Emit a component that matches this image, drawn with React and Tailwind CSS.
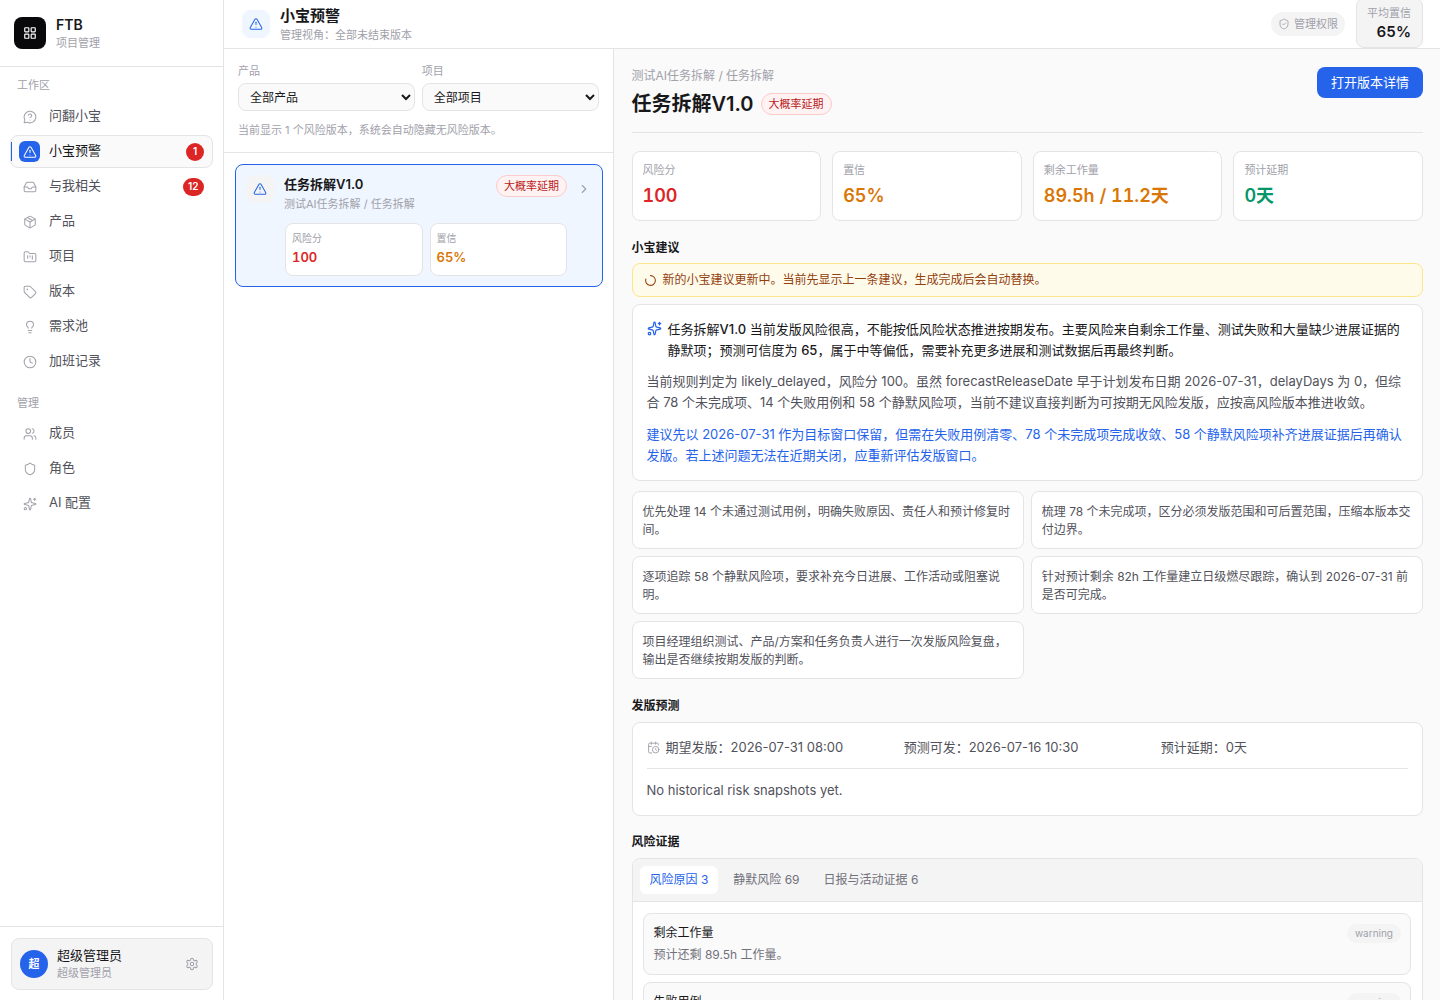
import React from "react";
import {
  MessageCircleQuestion, TriangleAlert, Inbox, Package, FolderKanban, Tag, Lightbulb, Clock,
  Users, Shield, Sparkles, LayoutGrid, ShieldCheck, Settings, ChevronRight, LoaderCircle, CalendarClock,
} from "lucide-react";

const workspace = [
  { label: "问翻小宝", Icon: MessageCircleQuestion },
  { label: "小宝预警", Icon: TriangleAlert, active: true, badge: "1" },
  { label: "与我相关", Icon: Inbox, badge: "12" },
  { label: "产品", Icon: Package },
  { label: "项目", Icon: FolderKanban },
  { label: "版本", Icon: Tag },
  { label: "需求池", Icon: Lightbulb },
  { label: "加班记录", Icon: Clock },
];
const admin = [
  { label: "成员", Icon: Users },
  { label: "角色", Icon: Shield },
  { label: "AI 配置", Icon: Sparkles },
];

function NavItem({ label, Icon, active, badge }) {
  return (
    <div className={`relative flex h-[33px] items-center rounded-lg border pl-2 pr-2 ${active ? "border-[#e4e4e7] bg-[#fafafa]" : "border-transparent"}`}>
      {active && <span className="absolute left-0 top-[6px] h-[19px] w-px bg-[#2563eb]" />}
      <span className={`flex h-[21px] w-[21px] items-center justify-center rounded-md ${active ? "bg-[#2563eb] text-white" : "text-[#a1a1aa]"}`}>
        <Icon size={14} strokeWidth={1.75} />
      </span>
      <span className={`mb-[2px] ml-[9px] flex-1 text-[13px] ${active ? "text-[#18181b]" : "text-[#52525b]"}`}>{label}</span>
      {badge && (
        <span className="flex h-[18px] min-w-[18px] items-center justify-center rounded-full bg-[#dc2626] px-[5.5px] text-[10px] font-semibold text-white">{badge}</span>
      )}
    </div>
  );
}

function Sidebar() {
  return (
    <aside className="flex h-full w-[224px] shrink-0 flex-col border-r border-[#e4e4e7] bg-white">
      <div className="flex h-[67px] items-center gap-[10px] border-b border-[#e4e4e7] pl-[14px]">
        <div className="flex h-8 w-8 items-center justify-center rounded-lg bg-[#09090b] text-white">
          <LayoutGrid size={14} strokeWidth={2} />
        </div>
        <div className="pt-[2px]">
          <div className="text-[14px] font-semibold leading-[18px] text-[#18181b]">FTB</div>
          <div className="text-[11px] leading-[18px] text-[#a1a1aa]">项目管理</div>
        </div>
      </div>
      <div className="flex-1 px-[10px] pt-[10px]">
        <div className="mb-[7px] pl-[7px] text-[11px] leading-[16px] text-[#a1a1aa]">工作区</div>
        <div className="flex flex-col gap-[2px]">
          {workspace.map((i) => <NavItem key={i.label} {...i} />)}
        </div>
        <div className="mb-[6px] mt-[17px] pl-[7px] text-[11px] leading-[16px] text-[#a1a1aa]">管理</div>
        <div className="flex flex-col gap-[2px]">
          {admin.map((i) => <NavItem key={i.label} {...i} />)}
        </div>
      </div>
      <div className="border-t border-[#e4e4e7] px-[11px] pb-[10px] pt-[11px]">
        <div className="flex h-[52px] w-[202px] items-center rounded-lg border border-[#e4e4e7] bg-[#f4f4f5] pl-2 pr-[13px]">
          <div className="flex h-7 w-7 items-center justify-center rounded-full bg-[#2563eb] text-[11px] font-semibold text-white">超</div>
          <div className="ml-[9px] flex-1">
            <div className="text-[13px] leading-[17px] text-[#18181b]">超级管理员</div>
            <div className="text-[11px] leading-[18px] text-[#a1a1aa]">超级管理员</div>
          </div>
          <Settings size={14} strokeWidth={1.75} className="text-[#a1a1aa]" />
        </div>
      </div>
    </aside>
  );
}

function TopBar() {
  return (
    <header className="flex h-[49px] shrink-0 items-center border-b border-[#e4e4e7] bg-white pl-[18px] pr-[17px]">
      <div className="flex h-7 w-7 items-center justify-center rounded-lg bg-[#eff6ff] text-[#2563eb]">
        <TriangleAlert size={14} strokeWidth={1.75} />
      </div>
      <div className="ml-[10px] flex-1 pt-px">
        <div className="text-[15px] font-semibold leading-[20px] text-[#18181b]">小宝预警</div>
        <div className="mt-px text-[11px] leading-[16px] text-[#a1a1aa]">管理视角：全部未结束版本</div>
      </div>
      <div className="flex h-6 items-center gap-1 rounded-full bg-[#f4f4f5] px-[7px] text-[11px] text-[#a1a1aa]">
        <ShieldCheck size={12} strokeWidth={1.75} />
        管理权限
      </div>
      <div className="ml-[11px] mt-[-2px] flex h-[50px] w-[67px] flex-col items-end justify-center rounded-lg border border-[#e4e4e7] bg-[#f4f4f5] px-[11px] pt-px">
        <div className="whitespace-nowrap text-[11px] leading-[16px] text-[#a1a1aa]">平均置信</div>
        <div className="mt-px text-[15px] font-semibold leading-[20px] tabular-nums text-[#18181b]">65%</div>
      </div>
    </header>
  );
}

function RiskBadge() {
  return (
    <span className="inline-flex h-[22px] items-center rounded-full border border-[#fecaca] bg-[#fef2f2] px-[7px] text-[11px] text-[#b91c1c]">大概率延期</span>
  );
}

function FilterSelect({ label, value }) {
  return (
    <div>
      <div className="mb-[4px] text-[11px] leading-[16px] text-[#a1a1aa]">{label}</div>
      <select defaultValue={value} className="h-7 w-full rounded-lg border border-[#e4e4e7] bg-[#fafafa] pl-[7px] text-[12px] text-[#18181b] outline-none">
        <option>{value}</option>
      </select>
    </div>
  );
}

function MiniStat({ label, value, color }) {
  return (
    <div className="h-[53px] flex-1 rounded-lg border border-[#e4e4e7] bg-white px-[6px] pt-[6px]">
      <div className="text-[10px] leading-[16px] text-[#a1a1aa]">{label}</div>
      <div className={`mt-px text-[13px] font-semibold leading-[20px] tabular-nums ${color}`}>{value}</div>
    </div>
  );
}

function ListPanel() {
  return (
    <section className="h-full w-[389.5px] shrink-0 border-r border-[#e4e4e7] bg-white">
      <div className="h-[104px] border-b border-[#e4e4e7] px-[14px] pt-[14px]">
        <div className="grid grid-cols-2 gap-[7px]">
          <FilterSelect label="产品" value="全部产品" />
          <FilterSelect label="项目" value="全部项目" />
        </div>
        <div className="mt-[11px] text-[11px] leading-[16px] text-[#a1a1aa]">当前显示 1 个风险版本，系统会自动隐藏无风险版本。</div>
      </div>
      <div className="pl-[11px] pr-[10px] pt-[11px]">
        <div className="flex h-[123px] rounded-lg border border-[#2563eb] bg-[#eff6ff] pl-[10px] pt-[10px]">
          <div className="flex h-7 w-7 shrink-0 items-center justify-center rounded-lg bg-[#f4f4f5] text-[#2563eb]">
            <TriangleAlert size={14} strokeWidth={1.75} />
          </div>
          <div className="ml-[10px] w-[283px]">
            <div className="flex items-start justify-between">
              <div>
                <div className="text-[13px] font-semibold leading-[18px] text-[#18181b]">任务拆解V1.0</div>
                <div className="text-[11px] leading-[22px] text-[#a1a1aa]">测试AI任务拆解 / 任务拆解</div>
              </div>
              <RiskBadge />
            </div>
            <div className="ml-px mt-[8px] flex gap-[7px]">
              <MiniStat label="风险分" value="100" color="text-[#dc2626]" />
              <MiniStat label="置信" value="65%" color="text-[#d97706]" />
            </div>
          </div>
          <ChevronRight size={14} strokeWidth={2} className="ml-[10px] mt-[7px] shrink-0 text-[#a1a1aa]" />
        </div>
      </div>
    </section>
  );
}

function Stat({ label, value, color }) {
  return (
    <div className="h-[70px] rounded-lg border border-[#e4e4e7] bg-white px-[10px] pt-[10px]">
      <div className="text-[11px] leading-[16px] text-[#a1a1aa]">{label}</div>
      <div className={`mt-[4px] text-[18px] font-semibold leading-[28px] tabular-nums ${color}`}>{value}</div>
    </div>
  );
}

function SectionTitle({ children, className = "" }) {
  return <div className={`text-[12px] font-semibold leading-[18px] text-[#18181b] ${className}`}>{children}</div>;
}

const actions = [
  "优先处理 14 个未通过测试用例，明确失败原因、责任人和预计修复时间。",
  "梳理 78 个未完成项，区分必须发版范围和可后置范围，压缩本版本交付边界。",
  "逐项追踪 58 个静默风险项，要求补充今日进展、工作活动或阻塞说明。",
  "针对预计剩余 82h 工作量建立日级燃尽跟踪，确认到 2026-07-31 前是否可完成。",
  "项目经理组织测试、产品/方案和任务负责人进行一次发版风险复盘，输出是否继续按期发版的判断。",
];

function Evidence({ title, desc, level }) {
  return (
    <div className="relative h-[62px] shrink-0 rounded-lg border border-[#e4e4e7] bg-[#fafafa] px-[10px] pt-[10px]">
      <div className="text-[12px] leading-[18px] text-[#18181b]">{title}</div>
      <div className="mt-[4px] text-[12px] leading-[18px] text-[#71717a]">{desc}</div>
      <span className="absolute right-[9px] top-[10px] flex h-[19px] items-center rounded-full bg-[#f4f4f5] px-2 text-[10px] text-[#a1a1aa]">{level}</span>
    </div>
  );
}

function Detail() {
  return (
    <main className="h-full min-w-0 flex-1 overflow-hidden bg-[#fafafa] pl-[18px] pr-[17px] pt-[18px]">
      <div className="flex h-[66px] items-start justify-between border-b border-[#e4e4e7]">
        <div>
          <div className="pt-px text-[12px] leading-[16px] text-[#a1a1aa]">测试AI任务拆解 / 任务拆解</div>
          <div className="mt-[5px] flex items-center gap-[7px]">
            <span className="text-[20px] font-semibold leading-[30px] text-[#18181b]">任务拆解V1.0</span>
            <RiskBadge />
          </div>
        </div>
        <button className="h-[31px] w-[106px] rounded-lg bg-[#2563eb] text-[13px] text-white">打开版本详情</button>
      </div>

      <div className="mt-[18px] grid grid-cols-4 gap-[11px]">
        <Stat label="风险分" value="100" color="text-[#dc2626]" />
        <Stat label="置信" value="65%" color="text-[#d97706]" />
        <Stat label="剩余工作量" value="89.5h / 11.2天" color="text-[#d97706]" />
        <Stat label="预计延期" value="0天" color="text-[#059669]" />
      </div>

      <SectionTitle className="mt-[18px]">小宝建议</SectionTitle>
      <div className="mt-[6px] flex h-[34px] items-center rounded-lg border border-[#fde68a] bg-[#fffbeb] pl-[11px] text-[12px] text-[#92400e]">
        <LoaderCircle size={13} strokeWidth={2} className="mr-[6px] -rotate-90" />
        新的小宝建议更新中。当前先显示上一条建议，生成完成后会自动替换。
      </div>

      <div className="mt-[7px] h-[177px] rounded-lg border border-[#e4e4e7] bg-white px-[14px] pt-[14px] text-[13px] leading-[21px]">
        <div className="flex text-[#18181b]">
          <Sparkles size={15} strokeWidth={2} className="mt-[2px] shrink-0 text-[#2563eb]" />
          <div className="ml-[6px]">
            <div>任务拆解<span className="font-medium">V1.0</span> 当前发版风险很高，不能按低风险状态推进按期发布。主要风险来自剩余工作量、测试失败和大量缺少进展证据的</div>
            <div>静默项；预测可信度为 <span className="font-medium">65</span>，属于中等偏低，需要补充更多进展和测试数据后再最终判断。</div>
          </div>
        </div>
        <p className="mt-[10px] text-[#52525b]">当前规则判定为 likely_delayed，风险分 100。虽然 forecastReleaseDate 早于计划发布日期 2026-07-31，delayDays 为 0，但综合 78 个未完成项、14 个失败用例和 58 个静默风险项，当前不建议直接判断为可按期无风险发版，应按高风险版本推进收敛。</p>
        <p className="mt-[11px] text-[#2563eb]">建议先以 2026-07-31 作为目标窗口保留，但需在失败用例清零、78 个未完成项完成收敛、58 个静默风险项补齐进展证据后再确认发版。若上述问题无法在近期关闭，应重新评估发版窗口。</p>
      </div>

      <div className="mt-[10px] grid grid-cols-2 gap-[7px]">
        {actions.map((a) => (
          <div key={a} className="h-[58px] rounded-lg border border-[#e4e4e7] bg-white px-[10px] pt-[11px] text-[12px] leading-[18px] text-[#52525b]">{a}</div>
        ))}
      </div>

      <SectionTitle className="mt-[18px]">发版预测</SectionTitle>
      <div className="mt-[7px] h-[94px] rounded-lg border border-[#e4e4e7] bg-white px-[14px] pt-[14px] text-[13px] leading-[20px] text-[#52525b]">
        <div className="grid grid-cols-3 gap-[10px] border-b border-[#e4e4e7] pb-[11px]">
          <div className="flex items-center">
            <CalendarClock size={13} strokeWidth={1.75} className="mr-[6px] text-[#a1a1aa]" />
            期望发版：2026-07-31 08:00
          </div>
          <div>预测可发：2026-07-16 10:30</div>
          <div>预计延期：0天</div>
        </div>
        <div className="mt-[11px]">No historical risk snapshots yet.</div>
      </div>

      <SectionTitle className="mt-[17px]">风险证据</SectionTitle>
      <div className="mt-[7px] rounded-lg border border-[#e4e4e7] bg-white">
        <div className="flex h-[43px] items-center rounded-t-lg border-b border-[#e4e4e7] bg-[#f4f4f5] pl-[7px] text-[12px] text-[#71717a]">
          <span className="flex h-7 items-center rounded-md bg-white px-[10px] text-[#2563eb]">风险原因 3</span>
          <span className="ml-[15px]">静默风险 69</span>
          <span className="ml-[24px]">日报与活动证据 6</span>
        </div>
        <div className="flex flex-col gap-[7px] pl-[10px] pr-[11px] pt-[11px]">
          <Evidence title="剩余工作量" desc="预计还剩 89.5h 工作量。" level="warning" />
          <Evidence title="失败用例" desc="14 个测试用例未通过。" level="warning" />
        </div>
      </div>
    </main>
  );
}

export default function App() {
  return (
    <div className="flex h-screen w-full overflow-hidden bg-white font-[Inter,'Noto_Sans_CJK_SC',sans-serif] text-[#18181b]">
      <Sidebar />
      <div className="flex h-full min-w-0 flex-1 flex-col">
        <TopBar />
        <div className="flex min-h-0 flex-1">
          <ListPanel />
          <Detail />
        </div>
      </div>
    </div>
  );
}
